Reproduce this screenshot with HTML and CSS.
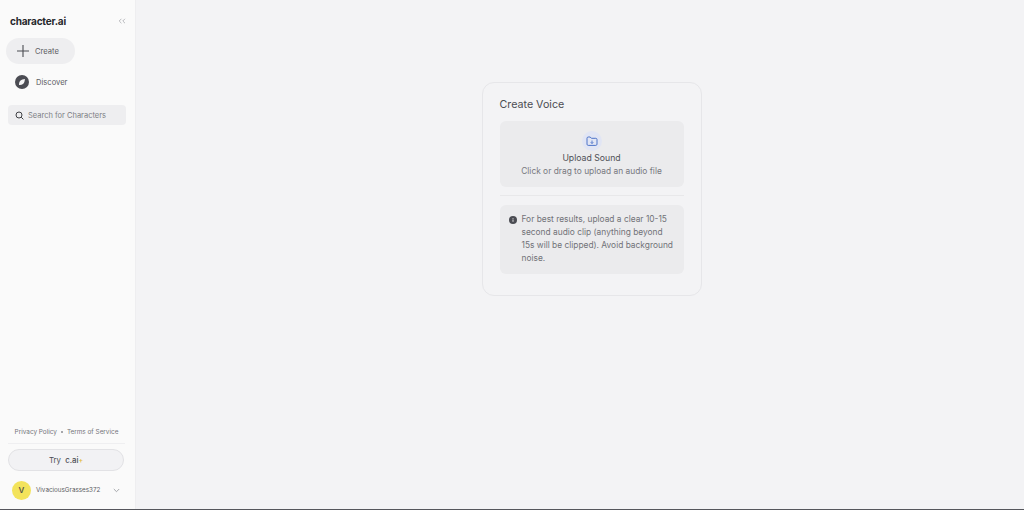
FILE: index.html
```html
<!DOCTYPE html>
<html lang="en">
<head>
  <meta charset="UTF-8">
  <title>Create Voice - character.ai</title>
  <link rel="stylesheet" href="styles.css">
</head>
<body>
  <div class="app">
    <aside class="sidebar">
      <div class="brand-row">
        <span class="brand">character.ai</span>
        <span class="collapse">
          <svg width="8" height="6" viewBox="0 0 8 6" fill="none" stroke="#a9abb0" stroke-width="0.8"><path d="M3.4 .8 1.2 3l2.2 2.2M7 .8 4.8 3 7 5.2"/></svg>
        </span>
      </div>
      <a class="create-btn">
        <svg width="12" height="12" viewBox="0 0 12 12" stroke="#4b4d52" stroke-width="1.1"><path d="M6 0v12M0 6h12"/></svg>
        <span>Create</span>
      </a>
      <a class="discover-btn">
        <svg width="14" height="14" viewBox="0 0 14 14"><circle cx="7" cy="7" r="7" fill="#4b4c53"/><path d="M4 10c-.2-2.800 1-5.200 3.400-5.600L10 4l-.5 2.500C9 9 7 10.300 4 10z" fill="#f4f4f5"/></svg>
        <span>Discover</span>
      </a>
      <div class="search">
        <svg width="9" height="9" viewBox="0 0 9 9" fill="none" stroke="#3f4145" stroke-width="1"><circle cx="4" cy="4" r="3"/><path d="m6.200 6.200 2.200 2.200"/></svg>
        <span>Search for Characters</span>
      </div>
      <div class="side-foot">
        <div class="legal">
          <span>Privacy Policy</span>
          <span class="dot"></span>
          <span>Terms of Service</span>
        </div>
        <button class="try-btn">Try <span class="cai">c.ai<i>+</i></span></button>
        <div class="user-row">
          <span class="avatar">V</span>
          <span class="username">VivaciousGrasses372</span>
          <svg width="7" height="5" viewBox="0 0 7 5" fill="none" stroke="#9b9da2" stroke-width="0.9"><path d="m.8 1 2.700 2.700L6.200 1"/></svg>
        </div>
      </div>
    </aside>
    <main class="content">
      <section class="voice-card">
        <h1>Create Voice</h1>
        <div class="upload">
          <span class="folder">
            <svg width="12" height="11" viewBox="0 0 12 11" fill="none" stroke="#4e74c9" stroke-width="1"><path d="M1 2.200C1 1.500 1.500 1 2.200 1h2l1.200 1.300h4.400c.7 0 1.200.5 1.200 1.200v4.700c0 .7-.5 1.200-1.200 1.200H2.200C1.500 9.400 1 8.900 1 8.200z"/><path d="M6 4.500v3M4.700 6.200 6 7.500l1.300-1.300" stroke-width="0.9"/></svg>
          </span>
          <div class="upload-title">Upload Sound</div>
          <div class="upload-sub">Click or drag to upload an audio file</div>
        </div>
        <hr class="divider">
        <div class="notice">
          <svg class="notice-icon" width="8" height="8" viewBox="0 0 8 8"><circle cx="4" cy="4" r="4" fill="#4b4c53"/><path d="M4 3.500v2.300M4 2v.8" stroke="#eee" stroke-width="0.9"/></svg>
          <p>For best results, upload a clear 10-15 second audio clip (anything beyond 15s will be clipped). Avoid background noise.</p>
        </div>
      </section>
    </main>
  </div>
</body>
</html>
```

FILE: styles.css
```css
html, body {
  margin: 0;
  padding: 0;
  height: 100%;
}
body {
  font-family: 'Inter', 'Noto Sans', sans-serif;
  background-color: #f3f3f5;
  color: #4b4c52;
  overflow: hidden;
}
.app {
  display: flex;
  height: 509px;
  border-bottom: 1px solid #55565c;
}
/* sidebar */
.sidebar {
  width: 136px;
  flex-shrink: 0;
  box-sizing: border-box;
  display: flex;
  flex-direction: column;
  background-color: #fafafa;
  border-right: 1px solid #eeeef0;
  padding: 14px 0 9px;
}
.brand-row {
  display: flex;
  align-items: center;
  justify-content: space-between;
  height: 14px;
  padding: 0 9px 0 10px;
}
.brand {
  font-size: 10px;
  font-weight: 700;
  letter-spacing: -0.2px;
  color: #26272b;
}
.collapse {
  display: flex;
}
.create-btn {
  display: flex;
  align-items: center;
  gap: 6px;
  box-sizing: border-box;
  width: 69px;
  height: 26px;
  margin: 10px 0 0 6px;
  padding-left: 11px;
  border-radius: 13px;
  background-color: #eeeef0;
  font-size: 7.6px;
  color: #5c5d63;
}
.discover-btn {
  display: flex;
  align-items: center;
  gap: 7px;
  height: 14px;
  margin: 11px 0 0 15px;
  font-size: 7.6px;
  color: #5c5d63;
}
.search {
  display: flex;
  align-items: center;
  gap: 4px;
  box-sizing: border-box;
  height: 20px;
  margin: 16px 9px 0 8px;
  padding-left: 7px;
  border-radius: 4px;
  background-color: #eeeef0;
  font-size: 7.5px;
  color: #7d7e84;
}
.side-foot {
  margin-top: auto;
}
.legal {
  display: flex;
  align-items: center;
  justify-content: center;
  gap: 4px;
  height: 16px;
  margin: 1px 10px -1px 8px;
  padding-bottom: 3px;
  border-bottom: 1px solid #efeff1;
  font-size: 6.4px;
  color: #74757b;
}
.dot {
  width: 2px;
  height: 2px;
  border-radius: 50%;
  background-color: #8a8b90;
}
.try-btn {
  display: block;
  box-sizing: border-box;
  width: 116px;
  height: 22px;
  margin: 6px 0 0 8px;
  border: 1px solid #e2e2e5;
  border-radius: 11px;
  background-color: #f2f2f4;
  font-family: inherit;
  font-size: 7.8px;
  color: #4b4c52;
  text-align: center;
}
.cai {
  margin-left: 2px;
  font-weight: 500;
}
.cai i {
  font-style: normal;
  font-size: 7px;
  color: #e2b93b;
}
.user-row {
  display: flex;
  align-items: center;
  height: 20px;
  margin: 9px 0 0 12px;
}
.avatar {
  display: flex;
  align-items: center;
  justify-content: center;
  width: 19px;
  height: 19px;
  border-radius: 50%;
  background-color: #f3e35b;
  font-size: 8px;
  font-weight: 600;
  color: #55534a;
}
.username {
  width: 77px;
  margin-left: 5px;
  font-size: 6.3px;
  color: #5c5d63;
  white-space: nowrap;
}
/* main area */
.content {
  flex: 1;
  display: flex;
  justify-content: center;
  align-items: flex-start;
  padding-top: 82px;
}
.voice-card {
  box-sizing: border-box;
  width: 220px;
  height: 214px;
  margin-left: 23px;
  padding: 15px 17px 0;
  border: 1px solid #e6e6e9;
  border-radius: 12px;
}
h1 {
  margin: 0 0 9px;
  font-size: 10.7px;
  line-height: 14px;
  font-weight: 400;
  color: #4b4c52;
}
.upload {
  box-sizing: border-box;
  height: 66px;
  padding-top: 10px;
  border-radius: 6px;
  background-color: #ebebed;
  text-align: center;
}
.folder {
  display: flex;
  align-items: center;
  justify-content: center;
  width: 20px;
  height: 20px;
  margin: 0 auto 1px;
  border-radius: 50%;
  background-color: #e1e5f4;
}
.upload-title {
  font-size: 8.7px;
  line-height: 12px;
  color: #4f5056;
}
.upload-sub {
  margin-top: 1px;
  font-size: 8.4px;
  line-height: 12px;
  color: #77787e;
}
.divider {
  height: 1px;
  margin: 8px 0 9px;
  border: 0;
  background-color: #e8e8ea;
}
.notice {
  display: flex;
  gap: 5px;
  box-sizing: border-box;
  height: 69px;
  padding: 8px 6px 0 9px;
  border-radius: 6px;
  background-color: #ebebed;
}
.notice-icon {
  flex-shrink: 0;
  margin-top: 3px;
}
.notice p {
  margin: 0;
  font-size: 8.4px;
  line-height: 13px;
  color: #717278;
}
```
